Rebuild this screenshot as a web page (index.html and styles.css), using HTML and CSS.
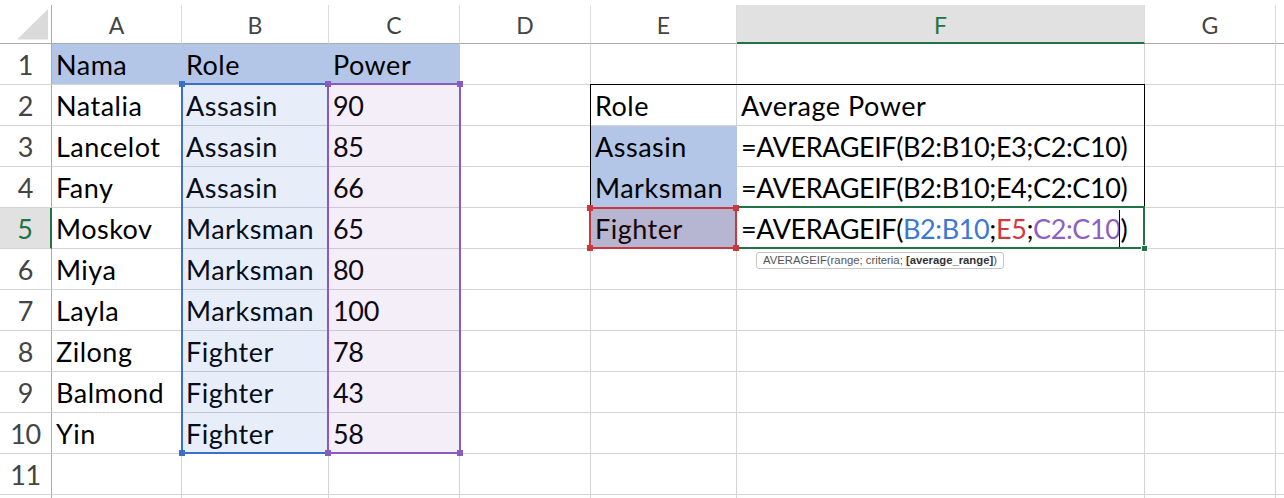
FILE: index.html
```html
<!DOCTYPE html>
<html lang="en">
<head>
    <meta charset="UTF-8">
    <title>AVERAGEIF</title>
    <link rel="stylesheet" href="styles.css">
</head>
<body>
    <div class="sheet">
        <div class="row">
            <div class="cell corner">
                <svg width="51" height="38" viewBox="0 0 51 38"><polygon points="17,34.5 48,34.5 48,4" fill="#dadada"/></svg>
            </div>
            <div class="cell col-head">A</div>
            <div class="cell col-head">B</div>
            <div class="cell col-head">C</div>
            <div class="cell col-head">D</div>
            <div class="cell col-head">E</div>
            <div class="cell col-head active">F</div>
            <div class="cell col-head">G</div>
            <div class="cell col-head edge"></div>
        </div>
        <div class="row">
            <div class="cell row-num">1</div>
            <div class="cell fill join-r">Nama</div>
            <div class="cell fill join-r">Role</div>
            <div class="cell fill join-r">Power</div>
            <div class="cell"></div>
            <div class="cell"></div>
            <div class="cell"></div>
            <div class="cell"></div>
            <div class="cell edge"></div>
        </div>
        <div class="row">
            <div class="cell row-num">2</div>
            <div class="cell">Natalia</div>
            <div class="cell">Assasin</div>
            <div class="cell num">90</div>
            <div class="cell"></div>
            <div class="cell">Role</div>
            <div class="cell">Average Power</div>
            <div class="cell"></div>
            <div class="cell edge"></div>
        </div>
        <div class="row">
            <div class="cell row-num">3</div>
            <div class="cell">Lancelot</div>
            <div class="cell">Assasin</div>
            <div class="cell num">85</div>
            <div class="cell"></div>
            <div class="cell fill join-r join-b">Assasin</div>
            <div class="cell formula">=AVERAGEIF(B2:B10;E3;C2:C10)</div>
            <div class="cell"></div>
            <div class="cell edge"></div>
        </div>
        <div class="row">
            <div class="cell row-num">4</div>
            <div class="cell">Fany</div>
            <div class="cell">Assasin</div>
            <div class="cell num">66</div>
            <div class="cell"></div>
            <div class="cell fill join-r">Marksman</div>
            <div class="cell formula">=AVERAGEIF(B2:B10;E4;C2:C10)</div>
            <div class="cell"></div>
            <div class="cell edge"></div>
        </div>
        <div class="row">
            <div class="cell row-num active">5</div>
            <div class="cell">Moskov</div>
            <div class="cell">Marksman</div>
            <div class="cell num">65</div>
            <div class="cell"></div>
            <div class="cell fill join-r">Fighter</div>
            <div class="cell formula">=AVERAGEIF(<span class="ref-blue">B2:B10</span>;<span class="ref-red">E5</span>;<span class="ref-purple">C2:C10</span>)</div>
            <div class="cell"></div>
            <div class="cell edge"></div>
        </div>
        <div class="row">
            <div class="cell row-num">6</div>
            <div class="cell">Miya</div>
            <div class="cell">Marksman</div>
            <div class="cell num">80</div>
            <div class="cell"></div>
            <div class="cell"></div>
            <div class="cell"></div>
            <div class="cell"></div>
            <div class="cell edge"></div>
        </div>
        <div class="row">
            <div class="cell row-num">7</div>
            <div class="cell">Layla</div>
            <div class="cell">Marksman</div>
            <div class="cell num">100</div>
            <div class="cell"></div>
            <div class="cell"></div>
            <div class="cell"></div>
            <div class="cell"></div>
            <div class="cell edge"></div>
        </div>
        <div class="row">
            <div class="cell row-num">8</div>
            <div class="cell">Zilong</div>
            <div class="cell">Fighter</div>
            <div class="cell num">78</div>
            <div class="cell"></div>
            <div class="cell"></div>
            <div class="cell"></div>
            <div class="cell"></div>
            <div class="cell edge"></div>
        </div>
        <div class="row">
            <div class="cell row-num">9</div>
            <div class="cell">Balmond</div>
            <div class="cell">Fighter</div>
            <div class="cell num">43</div>
            <div class="cell"></div>
            <div class="cell"></div>
            <div class="cell"></div>
            <div class="cell"></div>
            <div class="cell edge"></div>
        </div>
        <div class="row">
            <div class="cell row-num">10</div>
            <div class="cell">Yin</div>
            <div class="cell">Fighter</div>
            <div class="cell num">58</div>
            <div class="cell"></div>
            <div class="cell"></div>
            <div class="cell"></div>
            <div class="cell"></div>
            <div class="cell edge"></div>
        </div>
        <div class="row">
            <div class="cell row-num">11</div>
            <div class="cell"></div>
            <div class="cell"></div>
            <div class="cell"></div>
            <div class="cell"></div>
            <div class="cell"></div>
            <div class="cell"></div>
            <div class="cell"></div>
            <div class="cell edge"></div>
        </div>
        <div class="row">
            <div class="cell row-num"></div>
            <div class="cell"></div>
            <div class="cell"></div>
            <div class="cell"></div>
            <div class="cell"></div>
            <div class="cell"></div>
            <div class="cell"></div>
            <div class="cell"></div>
            <div class="cell edge"></div>
        </div>

        <!-- table outline E2:F5 -->
        <div class="outline"></div>

        <!-- formula reference ranges -->
        <div class="range blue"><i class="h tl"></i><i class="h tr"></i><i class="h bl"></i><i class="h br"></i></div>
        <div class="range purple"><i class="h tl"></i><i class="h tr"></i><i class="h bl"></i><i class="h br"></i></div>
        <div class="active-cell"></div>
        <div class="range red"><i class="h tl"></i><i class="h tr"></i><i class="h bl"></i><i class="h br"></i></div>
        <div class="fill-handle"></div>
        <div class="caret"></div>

        <div class="tooltip">AVERAGEIF(range; criteria; <b>[average_range]</b>)</div>
    </div>
</body>
</html>
```

FILE: styles.css
```css
* {
    box-sizing: border-box;
}

body {
    margin: 0;
    background: #fff;
    font-family: "Lato", "Noto Sans", sans-serif;
    overflow: hidden;
}

.sheet {
    position: relative;
    display: grid;
    grid-template-columns: 52px 130px 147px 131px 131px 146px 408px 131px 8px;
    grid-template-rows: 39px;
    grid-auto-rows: 41px;
    padding-top: 5px;
    height: 498px;
    overflow: hidden;
}

.row {
    display: contents;
}

.cell {
    display: flex;
    align-items: flex-end;
    padding: 0 4px 6px;
    border-right: 1px solid #d4d4d4;
    border-bottom: 1px solid #d4d4d4;
    font-size: 27px;
    line-height: 27px;
    letter-spacing: 0.5px;
    color: #000;
    white-space: nowrap;
}

.cell.num {
    letter-spacing: -0.3px;
}

.cell.formula {
    letter-spacing: -0.4px;
}

.edge {
    border-right: none;
}

/* headers */
.corner {
    padding: 0;
    align-items: stretch;
    border-right-color: #ababab;
    border-bottom-color: #ababab;
}

.corner svg {
    display: block;
}

.col-head {
    justify-content: center;
    padding-bottom: 6px;
    font-size: 23px;
    line-height: 23px;
    letter-spacing: 0;
    color: #444;
    border-right-color: #dcdcdc;
    border-bottom-color: #ababab;
}

.col-head.active {
    background: #e1e1e1;
    color: #217346;
    border-bottom: 2px solid #217346;
    padding-bottom: 5px;
}

.row-num {
    justify-content: center;
    padding: 0 0 6px;
    letter-spacing: -0.3px;
    color: #444;
    border-right-color: #ababab;
}

.row-num.active {
    background: #e1e1e1;
    color: #217346;
    border-right: 2px solid #217346;
}

/* filled cells */
.fill {
    background: #b4c6e7;
}

.join-r {
    border-right-color: #b4c6e7;
}

.join-b {
    border-bottom-color: #b4c6e7;
}

/* formula colours */
.ref-blue {
    color: #3b78d6;
}

.ref-red {
    color: #d03a3c;
}

.ref-purple {
    color: #8d5ec4;
}

/* overlays */
.outline {
    position: absolute;
    left: 590px;
    top: 84px;
    width: 555px;
    height: 165px;
    border: 1px solid #000;
}

.range {
    position: absolute;
    border: 2px solid;
}

.range.blue {
    left: 181px;
    top: 83px;
    width: 148px;
    height: 371px;
    border-color: #3a6fcc;
    background: rgba(58, 111, 204, 0.12);
}

.range.purple {
    left: 327px;
    top: 83px;
    width: 134px;
    height: 371px;
    border-color: #8a5bbf;
    background: rgba(138, 91, 191, 0.1);
}

.range.red {
    left: 589px;
    top: 207px;
    width: 148px;
    height: 42px;
    border-color: #c8383c;
    background: rgba(200, 56, 60, 0.12);
}

.range.blue .h { background: #3a6fcc; }
.range.purple .h { background: #8a5bbf; }
.range.red .h { background: #c8383c; }

.h {
    position: absolute;
    width: 6px;
    height: 6px;
}

.h.tl { left: -4px; top: -4px; }
.h.tr { right: -4px; top: -4px; }
.h.bl { left: -4px; bottom: -4px; }
.h.br { right: -4px; bottom: -4px; }

.active-cell {
    position: absolute;
    left: 735px;
    top: 206px;
    width: 410px;
    height: 43px;
    border: 2px solid #217346;
}

.fill-handle {
    position: absolute;
    left: 1141px;
    top: 245px;
    width: 7px;
    height: 7px;
    background: #217346;
    border: 1px solid #fff;
}

.caret {
    position: absolute;
    left: 1119px;
    top: 210px;
    width: 1px;
    height: 37px;
    background: #000;
}

.tooltip {
    position: absolute;
    left: 756px;
    top: 252px;
    height: 17px;
    padding: 0 6px;
    border: 1px solid #c6c6c6;
    border-radius: 3px;
    background: #fff;
    font-family: "Liberation Sans", Arial, sans-serif;
    font-size: 11.3px;
    line-height: 15px;
    color: #555;
    white-space: nowrap;
}

.tooltip b {
    color: #333;
}
```
